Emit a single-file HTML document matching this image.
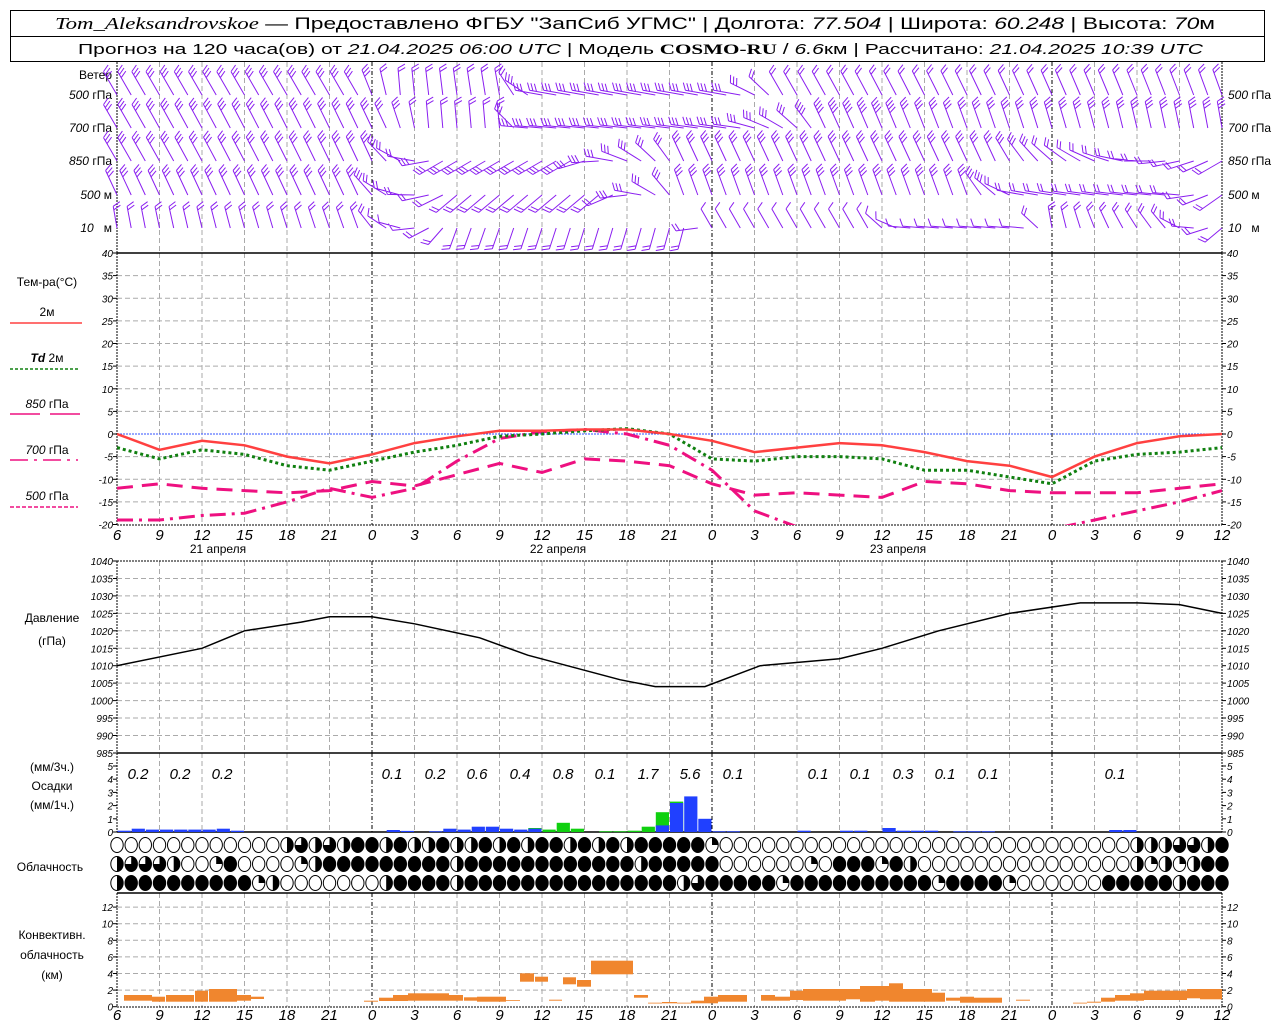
<!DOCTYPE html>
<html><head><meta charset="utf-8">
<style>
html,body{margin:0;padding:0;background:#fff;width:1280px;height:1024px;overflow:hidden}
svg{display:block}
.l{font-family:"Liberation Sans",sans-serif;font-size:12px;fill:#000}
.n{font-family:"Liberation Sans",sans-serif;font-size:10px;font-style:italic;fill:#000}
.xl{font-family:"Liberation Sans",sans-serif;font-size:15px;font-style:italic;fill:#000}
.h{font-family:"Liberation Sans",sans-serif;fill:#000}
.i{font-style:italic}
.s{font-family:"Liberation Serif",serif;font-style:italic}
</style></head><body>
<svg id="g" width="1280" height="1024" viewBox="0 0 1280 1024" xmlns="http://www.w3.org/2000/svg">
<rect x="10.5" y="10.5" width="1254" height="51" fill="#fff" stroke="#000"/>
<line x1="10" y1="36.5" x2="1265" y2="36.5" stroke="#000"/>
<text class="h" x="55" y="29" font-size="17" textLength="1160" lengthAdjust="spacingAndGlyphs"><tspan class="s">Tom_Aleksandrovskoe</tspan> — Предоставлено ФГБУ "ЗапСиб УГМС" | Долгота: <tspan class="i">77.504</tspan> | Широта: <tspan class="i">60.248</tspan> | Высота: <tspan class="i">70</tspan>м</text>
<text class="h" x="78" y="54" font-size="15" textLength="1125" lengthAdjust="spacingAndGlyphs">Прогноз на 120 часа(ов) от <tspan class="i">21.04.2025 06:00 UTC</tspan> | Модель <tspan font-family="Liberation Serif" font-weight="bold">COSMO-RU</tspan> / <tspan class="i">6.6</tspan>км | Рассчитано: <tspan class="i">21.04.2025 10:39 UTC</tspan></text>

<text class="l" x="112" y="79" text-anchor="end">Ветер</text>
<text class="l" x="47" y="286" text-anchor="middle">Тем-ра(°С)</text>
<text class="l" x="47" y="316" text-anchor="middle" font-size="11">2м</text>
<line x1="10" y1="323" x2="82" y2="323" stroke="#ff4040" stroke-width="1.5"/>
<text class="l" x="47" y="362" text-anchor="middle" font-size="11"><tspan class="i" font-weight="bold">Td</tspan> 2м</text>
<line x1="10" y1="369" x2="78" y2="369" stroke="#108010" stroke-width="1.5" stroke-dasharray="3,2"/>
<text class="l" x="47" y="408" text-anchor="middle" font-size="11"><tspan class="i">850</tspan> гПа</text>
<line x1="10" y1="414" x2="82" y2="414" stroke="#ee1080" stroke-width="1.5" stroke-dasharray="30,10"/>
<text class="l" x="47" y="454" text-anchor="middle" font-size="11"><tspan class="i">700</tspan> гПа</text>
<line x1="10" y1="460" x2="78" y2="460" stroke="#ee1080" stroke-width="1.5" stroke-dasharray="18,6,3,6"/>
<text class="l" x="47" y="500" text-anchor="middle" font-size="11"><tspan class="i">500</tspan> гПа</text>
<line x1="10" y1="507" x2="78" y2="507" stroke="#ee1080" stroke-width="1.5" stroke-dasharray="4,2"/>
<text class="l" x="218" y="553" text-anchor="middle" font-size="13">21 апреля</text>
<text class="l" x="558" y="553" text-anchor="middle" font-size="13">22 апреля</text>
<text class="l" x="898" y="553" text-anchor="middle" font-size="13">23 апреля</text>
<text class="l" x="52" y="622" text-anchor="middle">Давление</text>
<text class="l" x="52" y="645" text-anchor="middle">(гПа)</text>
<text class="l" x="52" y="771" text-anchor="middle">(мм/3ч.)</text>
<text class="l" x="52" y="790" text-anchor="middle">Осадки</text>
<text class="l" x="52" y="809" text-anchor="middle">(мм/1ч.)</text>
<text class="l" x="50" y="871" text-anchor="middle">Облачность</text>
<text class="l" x="52" y="939" text-anchor="middle">Конвективн.</text>
<text class="l" x="52" y="959" text-anchor="middle">облачность</text>
<text class="l" x="52" y="979" text-anchor="middle">(км)</text>
<g class="xl" text-anchor="middle">
<text x="138" y="779">0.2</text><text x="180" y="779">0.2</text><text x="222" y="779">0.2</text>
<text x="392" y="779">0.1</text><text x="435" y="779">0.2</text><text x="477" y="779">0.6</text>
<text x="520" y="779">0.4</text><text x="563" y="779">0.8</text><text x="605" y="779">0.1</text>
<text x="648" y="779">1.7</text><text x="690" y="779">5.6</text><text x="733" y="779">0.1</text>
<text x="818" y="779">0.1</text><text x="860" y="779">0.1</text><text x="903" y="779">0.3</text>
<text x="945" y="779">0.1</text><text x="988" y="779">0.1</text><text x="1115" y="779">0.1</text>
</g>
<g id="dyn"></g>
</svg>
<script>
(function(){
var X0=117,X1=1222,PX=(X1-X0)/78,s='';
function xh(h){return X0+h*PX;}
function ln(a,b,c,d,st,w,da){s+='<line x1="'+a.toFixed(1)+'" y1="'+b.toFixed(1)+'" x2="'+c.toFixed(1)+'" y2="'+d.toFixed(1)+'" stroke="'+st+'" stroke-width="'+(w||1)+'"'+(da?' stroke-dasharray="'+da+'"':'')+'/>';}
function tx(x,y,t,cls,anc,extra){s+='<text class="'+cls+'" x="'+x+'" y="'+y+'"'+(anc?' text-anchor="'+anc+'"':'')+(extra||'')+'>'+t+'</text>';}
function rc(x,y,w,h,f){s+='<rect x="'+x.toFixed(1)+'" y="'+y.toFixed(1)+'" width="'+w.toFixed(1)+'" height="'+Math.max(h,0.8).toFixed(1)+'" fill="'+f+'"/>';}
var secs=[[62,253],[253,525],[561,753],[753,832],[893,1007]];
secs.forEach(function(sc){
  for(var i=1;i<26;i++){var h=i*3;var x=xh(h);
    if(h==18||h==42||h==66) ln(x,sc[0],x,sc[1],'#000',1,'4,2,1,2');
    else ln(x,sc[0],x,sc[1],'#aaa',1,'5,3');}
});
for(var v=35;v>=-15;v-=5){var y=434-v*4.525; if(v==0) ln(X0,y,X1,y,'#3050ff',1,'2,1'); else ln(X0,y,X1,y,'#aaa',1,'5,3');}
for(var p=1035;p>985;p-=5){var y=561+(1040-p)*3.49; ln(X0,y,X1,y,'#aaa',1,'5,3');}
for(var k=2;k<=12;k+=2){var y=1006.7-k*8.3; ln(X0,y,X1,y,'#aaa',1,'5,3');}
secs.forEach(function(sc){ln(X0,sc[0],X0,sc[1],'#000',1,'2,1');ln(X1,sc[0],X1,sc[1],'#000',1,'2,1');});
ln(X0,253,X1,253,'#000',1.5);ln(X0,525,X1,525,'#000',1,'2,1');ln(X0,561,X1,561,'#000',1,'2,1');
ln(X0,753,X1,753,'#000',1.5);ln(X0,832,X1,832,'#000',1.5);ln(X0,893,X1,893,'#000',1.5);ln(X0,1007,X1,1007,'#000',1,'2,1');
function yl(y,t){ln(X0-4,y,X0,y,'#000');ln(X1,y,X1+4,y,'#000');tx(X0-4,y+4,t,'n','end');tx(X1+5,y+4,t,'n','start');}
for(var v=40;v>=-20;v-=5) yl(434-v*4.525,v);
for(var p=1040;p>=985;p-=5) yl(561+(1040-p)*3.49,p);
for(var v=5;v>=1;v--) yl(832-v*13.2,v); yl(832,0);
for(var k=12;k>=0;k-=2) yl(1006.7-k*8.3,k);
var wl=[[95,'<tspan class="i">500</tspan> гПа'],[128,'<tspan class="i">700</tspan> гПа'],[161,'<tspan class="i">850</tspan> гПа'],[195,'<tspan class="i">500</tspan> м'],[228,'<tspan class="i">10</tspan>&#160;&#160; м']];
wl.forEach(function(w){tx(112,w[0]+4,w[1],'l','end',' font-size="10"');tx(1228,w[0]+4,w[1],'l','start',' font-size="10"');});
for(var i=0;i<27;i++){var t=(6+3*i)%24;tx(xh(3*i),540,t,'xl','middle');tx(xh(3*i),1020,t,'xl','middle');}
var levels=[
 [95,27,[[0,-120,3],[17,-120,3],[20,-95,2],[27,-100,2],[30,-170,3],[44,-170,3],[47,-120,2],[78,-110,2]]],
 [128,27,[[0,-120,3],[19,-115,3],[22,-95,2],[27,-95,2],[29,-175,3],[44,-172,3],[47,-150,3],[50,-115,4],[60,-110,3],[78,-100,3]]],
 [161,27,[[0,-120,3],[18,-115,3],[21,-170,2],[23,-210,3],[32,-210,3],[35,-170,3],[40,-115,3],[62,-115,3],[68,-150,2],[78,-210,2]]],
 [195,27,[[0,-115,3],[17,-115,3],[20,-165,2],[24,-220,2],[34,-220,2],[37,-170,3],[40,-110,3],[60,-110,3],[64,-170,2],[75,-175,2],[78,-215,2]]],
 [228,22,[[0,-100,2],[17,-110,2],[20,-165,1],[24,-250,2],[40,-255,2],[42,-120,1],[53,-120,1],[56,-175,1],[64,-175,1],[66,-100,2],[74,-130,2],[78,-220,2]]]
];
var wp='';
levels.forEach(function(L){
  var y0=L[0],len=L[1],K=L[2];
  for(var h=0;h<=78;h++){
    var j=0;while(j<K.length-2&&K[j+1][0]<=h)j++;
    var a=K[j],b=K[j+1],t=(h-a[0])/Math.max(b[0]-a[0],1);t=Math.max(0,Math.min(1,t));
    var ang=(a[1]+(b[1]-a[1])*t)*Math.PI/180,n=Math.round(a[2]+(b[2]-a[2])*t);
    var x=xh(h),dx=Math.cos(ang),dy=Math.sin(ang);
    var tx2=x+dx*len,ty2=y0+dy*len;
    wp+='M'+x.toFixed(1)+' '+y0+'L'+tx2.toFixed(1)+' '+ty2.toFixed(1);
    var fa=ang+65*Math.PI/180,fx=Math.cos(fa)*8,fy=Math.sin(fa)*8;
    for(var f=0;f<n;f++){var bx=tx2-dx*f*3.5,by=ty2-dy*f*3.5;wp+='M'+bx.toFixed(1)+' '+by.toFixed(1)+'l'+fx.toFixed(1)+' '+fy.toFixed(1);}
  }
});
s+='<path d="'+wp+'" stroke="#8a1ef0" stroke-width="1" fill="none"/>';
function curve(vals,col,w,da,step){var d='';vals.forEach(function(v,i){d+=(i?'L':'M')+xh(i*step).toFixed(1)+' '+(434-v*4.525).toFixed(1);});
 s+='<path d="'+d+'" stroke="'+col+'" stroke-width="'+w+'" fill="none"'+(da?' stroke-dasharray="'+da+'"':'')+' clip-path="url(#tc)"/>';}
s+='<defs><clipPath id="tc"><rect x="117" y="253" width="1105" height="272"/></clipPath></defs>';
curve([-12,-11,-12,-12.5,-13,-12.5,-10.5,-11.5,-9,-6.5,-8.5,-5.5,-6,-7,-11,-13.5,-13,-13.5,-14,-10.5,-11,-12.5,-13,-13,-13,-12,-11],'#ee1080',3,'16,9',3);
curve([-19,-19,-18,-17.5,-15,-12,-14,-12,-6,-1,0.5,1,0,-2.5,-8,-17,-20.5,-22,-22,-22,-22,-22,-21,-19,-17,-15,-12.5],'#ee1080',3,'16,6,3,6',3);
curve([-3,-5.5,-3.5,-4.5,-7,-8,-6,-4,-2.5,-0.5,0,0.7,1.2,0,-5.5,-6,-5,-5,-5.5,-8,-8,-9.5,-11,-6,-4.5,-4,-3],'#108010',3,'3,3',3);
curve([0,-3.5,-1.5,-2.5,-5,-6.5,-4.5,-2,-0.5,0.7,0.7,1,1,0,-1.5,-4,-3,-2,-2.5,-4,-6,-7,-9.5,-5,-2,-0.5,0],'#ff4040',2.5,null,3);
var pp=[[0,1010],[6,1015],[9,1020],[13,1022.5],[15,1024],[18,1024],[21,1022],[25.6,1018],[29,1013],[35.5,1006],[38,1004],[41.5,1004],[45.4,1010],[51,1012],[54,1015],[58,1020],[63,1025],[68,1028],[72,1028],[75,1027.5],[78,1025]];
var pd='';pp.forEach(function(q,i){pd+=(i?'L':'M')+xh(q[0]).toFixed(1)+' '+(561+(1040-q[1])*3.49).toFixed(1);});
s+='<path d="'+pd+'" stroke="#000" stroke-width="1.5" fill="none"/>';
var B='#2040ff',G='#10d010';
var pr=[[0,.1],[1,.25],[2,.18],[3,.18],[4,.18],[5,.18],[6,.18],[7,.25],[8,.1],[19,.15],[20,.08],[22,.05],[23,.25],[24,.18],[25,.4],[26,.4],[27,.25],[28,.18],[29,.25],[41,1.0],[40,2.7],[42,.05],[43,.05],[48,.1],[51,.1],[52,.1],[54,.3],[55,.1],[56,.1],[57,.1],[59,.05],[60,.05],[61,.05],[70,.15],[71,.15]];
var pg=[[29,.3],[30,.18],[31,.7],[32,.25],[34,.05],[35,.05],[36,.1],[37,.4],[38,1.5],[39,2.3]];
pg.forEach(function(q){rc(X0+q[0]*PX+0.5,832-q[1]*13.2,PX-1,q[1]*13.2,G);});
pr.forEach(function(q){rc(X0+q[0]*PX+0.5,832-q[1]*13.2,PX-1,q[1]*13.2,B);});
rc(X0+38*PX+0.5,832-.5*13.2,PX-1,.5*13.2,B);rc(X0+39*PX+0.5,832-2.2*13.2,PX-1,2.2*13.2,B);
var rows=[
 'oooooooooooo'+'h3h3hf'+'fhfhhfhhfhfhffhfhfhfffff'+'q'+'ooooooooooooooooooooooooooooo'+'hhh33hf',
 'h333hooqf'+'oooo'+'q'+'h'+'fffffffffhffffffffffffhffff'+'f'+'oooooo'+'q'+'o'+'fff'+'q'+'f'+'h'+'ooooooooooooooo'+'hqhqhff',
 'h'+'fffffffff'+'q'+'h'+'ooooooo'+'h'+'ffffhfffffffffffffff'+'h'+'3'+'fffff'+'q'+'ffffffffff'+'q'+'ffff'+'q'+'oooooo'+'fffff'+'h'+'fff'
];
var cy=[845,864,883],rx=6.2,ry=7.5;
rows.forEach(function(r,ri){
 for(var i=0;i<79;i++){var c=r.charAt(i)||'o',x=xh(i),y=cy[ri];
  s+='<ellipse cx="'+x.toFixed(1)+'" cy="'+y+'" rx="'+rx+'" ry="'+ry+'" stroke="#000" stroke-width="1" fill="'+(c=='f'?'#000':'#fff')+'"/>';
  if(c=='h'){s+='<path d="M'+x.toFixed(1)+' '+(y-ry)+'A'+rx+' '+ry+' 0 0 1 '+x.toFixed(1)+' '+(y+ry)+'Z" fill="#000"/>';}
  else if(c=='q'){s+='<path d="M'+x.toFixed(1)+' '+y+'V'+(y-ry)+'A'+rx+' '+ry+' 0 0 1 '+(x+rx).toFixed(1)+' '+y+'Z" fill="#000"/>';}
  else if(c=='3'){s+='<path d="M'+x.toFixed(1)+' '+y+'V'+(y-ry)+'A'+rx+' '+ry+' 0 1 1 '+(x-rx).toFixed(1)+' '+y+'Z" fill="#000"/>';}
 }
});
var O='#f0862e';
[[124,152,995,1000.7],[152,165,996.7,1001.7],[166,194,995,1001.7],[195,208,990.7,1001.7],[209,237,989,1001.7],[237,251,995,1000.7],[251,264,996.7,999],[364,378,1000.7,1001.7],[379,393,997.7,1001],[393,408,995,1001],[408,449,993.3,1000.7],[449,463,995,1000.7],[464,477,997.3,1000.7],[477,506,996.7,1001.7],[506,520,1000,1000.7],[520,534,973.3,981.7],[535,548,976.7,981.7],[549,562,999.7,1000.7],[563,576,977.3,984.3],[577,591,980,986.7],[591,633,960.7,974.3],[634,648,995,997.7],[648,662,1002.7,1003.3],[662,677,1002,1003.3],[677,691,1002.7,1003.3],[691,704,1000.7,1003.3],[704,718,996.7,1003.3],[718,747,995,1001.7],[761,775,995,1000.7],[775,790,996.7,1000.7],[790,803,990.7,1000],[803,846,989,1000.7],[846,860,989,999.3],[860,875,986,1001.7],[875,889,986,1000.7],[889,903,983.3,1001.7],[903,932,989,1001.7],[932,945,992.7,1001.7],[946,960,997.7,1000.7],[960,974,996.7,1002.7],[974,1002,997.7,1002.7],[1016,1030,999.7,1000.7],[1073,1087,1002.7,1003.3],[1087,1101,1001.7,1002.7],[1101,1115,997.7,1001.7],[1115,1130,995,1000.7],[1130,1144,993.3,1000.7],[1144,1187,990.7,1000],[1187,1200,989,998.3],[1200,1222,989,999.3]].forEach(function(b){rc(b[0],b[2],b[1]-b[0],b[3]-b[2],O);});
document.getElementById('dyn').innerHTML=s;
})();
</script>
</body></html>
